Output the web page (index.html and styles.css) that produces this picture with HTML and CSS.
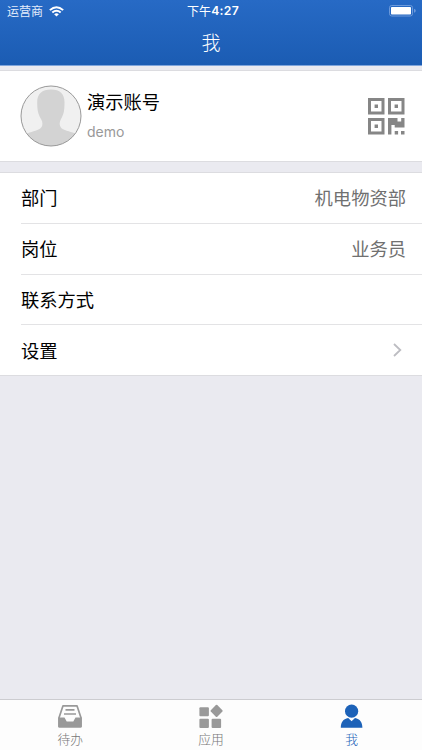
FILE: index.html
```
<!DOCTYPE html>
<html lang="zh-CN">
<head>
<meta charset="utf-8">
<meta name="viewport" content="width=device-width">
<title>我</title>
<link rel="stylesheet" href="styles.css">
</head>
<body>
<div class="screen">
  <header class="header">
    <div class="status">
      <div class="carrier"><span>运营商</span>
        <svg class="wifi" width="15" height="11" viewBox="0 0 14 11" preserveAspectRatio="none" fill="none" stroke="#fff" stroke-width="1.9"><path d="M.8 4.1Q7-1.7 13.2 4.1M3.1 6.5Q7 3 10.9 6.5"/><path d="M4.8 8.3Q7 6.4 9.2 8.3L7 10.6z" fill="#fff" stroke="none"/></svg>
      </div>
      <div class="clock">下午<b>4:27</b></div>
      <svg class="battery" width="28" height="12" viewBox="0 0 28 12"><rect x=".5" y=".5" width="23" height="10.5" rx="2.2" fill="none" stroke="#6d9adb"/><rect x="2" y="2" width="20" height="7.5" rx=".8" fill="#fff"/><path d="M25 3.8q1.8.3 1.8 2t-1.8 2z" fill="#6d9adb"/></svg>
    </div>
    <h1 class="title">我</h1>
  </header>
  <main class="content">
    <section class="profile">
      <svg class="avatar" width="62" height="62" viewBox="0 0 62 62">
        <defs><clipPath id="face"><circle cx="31" cy="31" r="30"/></clipPath></defs>
        <circle cx="31" cy="31" r="30" fill="#f0f0f0"/>
        <path clip-path="url(#face)" fill="#d3d3d3" d="M31 4.5C22 4.5 17.2 9 17.2 17C17.2 25 18 29 21 34C23.4 38 22.8 42 19 44.2C14.5 46.8 9 46.5 3 51V62H60V51C53 46.5 48 46.8 43 44.2C39.2 42 38.8 38 41 34C44 29 44.5 25 44.5 17C44.5 9 40 4.5 31 4.5Z"/>
        <circle cx="31" cy="31" r="30" fill="none" stroke="#999"/>
      </svg>
      <div class="identity"><div class="name">演示账号</div><div class="login">demo</div></div>
      <svg class="qr" width="37" height="37" viewBox="0 0 37 37" fill="#868686">
        <path fill-rule="evenodd" d="M0 0h16.5v16.5H0zM3 3v10.5h10.5V3zM20 0h16.5v16.5H20zM23 3v10.5h10.5V3zM0 20h16.5v16.5H0zM3 23v10.5h10.5V23z"/>
        <path d="M6.6 6.6h3.4v3.4H6.6zM26.6 6.6h3.4v3.4h-3.4zM6.6 26.6h3.4v3.4H6.6zM20 20h9.5v3.5h3.7V20h3.3v9.5h-9.8V27h-3.3v9.5H20zM26.7 33h3.4v3.5h-3.4zM33 33h3.5v3.5H33z"/>
      </svg>
    </section>
    <section class="list">
      <div class="row"><span>部门</span><span class="value">机电物资部</span></div>
      <div class="row"><span>岗位</span><span class="value">业务员</span></div>
      <div class="row"><span>联系方式</span></div>
      <div class="row"><span>设置</span><svg class="chevron" width="9" height="14" viewBox="0 0 9 14" fill="none" stroke="#bdbdc2" stroke-width="1.8"><path d="M1 1l6.3 6L1 13"/></svg></div>
    </section>
  </main>
  <nav class="tabs">
    <div class="tab">
      <svg width="26" height="25" viewBox="0 0 26 25"><path d="M6 1.8h14l4 12v8.8H2v-8.8z" fill="none" stroke="#999" stroke-width="1.7" stroke-linejoin="round"/><path d="M1.3 13.4h6.2l2.2 4.1h6.6l2.2-4.1h6.2v8.8q0 1.4-1.4 1.4H2.7q-1.4 0-1.4-1.4z" fill="#999"/><path d="M8.5 5.8h9M7 10h12" fill="none" stroke="#999" stroke-width="1.7"/></svg>
      <span>待办</span>
    </div>
    <div class="tab">
      <svg width="26" height="25" viewBox="0 0 26 25" fill="#999"><rect x="1.4" y="3.2" width="9.5" height="9" rx="1"/><rect x="1.4" y="14.7" width="9.5" height="9.2" rx="1"/><rect x="13.6" y="14.7" width="9.5" height="9.2" rx="1"/><rect x="14" y="2.3" width="9.2" height="9.2" rx="1" transform="rotate(45 18.6 6.9)"/></svg>
      <span>应用</span>
    </div>
    <div class="tab active">
      <svg width="26" height="25" viewBox="0 0 26 25" fill="#1d62b8"><circle cx="12.6" cy="7.2" r="6.6"/><path d="M1.8 23.8c.2-5.5 2.2-8.7 7.4-9.7l3.4 3.2 3.4-3.2c5.2 1 7.2 4.2 7.4 9.7z"/></svg>
      <span>我</span>
    </div>
  </nav>
</div>
</body>
</html>
```
FILE: styles.css
```
* { box-sizing: border-box; }
body {
  margin: 0;
  font-family: "Noto Sans CJK SC", sans-serif;
  color: #000;
}
.screen {
  height: 750px;
  display: flex;
  flex-direction: column;
  background: #eaeaf0;
}
.header {
  height: 66px;
  background: linear-gradient(#276ac5, #1b5cb3);
  border-bottom: 1px solid #7fa5dc;
  color: #fff;
}
.status {
  height: 22px;
  display: grid;
  grid-template-columns: 1fr auto 1fr;
  align-items: center;
  padding: 0 5px 0 7px;
  font-size: 12px;
  line-height: 22px;
}
.carrier { display: flex; align-items: center; gap: 6px; color: #e3edfb; }
.clock { display: flex; padding-left: 2px; letter-spacing: .1px; }
.clock b { font: 600 12.2px/22px Inter, sans-serif; letter-spacing: .3px; }
.battery { justify-self: end; }
.title {
  margin: 0;
  font-size: 19px;
  font-weight: 300;
  line-height: 40px;
  text-align: center;
}
.content { flex: 1; padding-top: 4px; }
.profile {
  height: 92px;
  display: flex;
  align-items: center;
  padding: 0 17px 0 20px;
  background: #fff;
  border: solid #dcdce0;
  border-width: 1px 0;
}
.identity { flex: 1; padding: 0 0 3px 5px; }
.name { font-size: 18.3px; line-height: 28px; }
.login { font: 14px/20px Inter, sans-serif; color: #999; margin-top: 7px; }
.list {
  margin-top: 10px;
  background: #fff;
  border: solid #dcdce0;
  border-width: 1px 0;
}
.row {
  height: 50.75px;
  margin-left: 21px;
  padding: 0 16px 1px 0;
  display: flex;
  align-items: center;
  justify-content: space-between;
  border-bottom: 1px solid #e3e3e5;
  font-size: 18.3px;
}
.row:last-child { border-bottom: 0; height: 49.75px; }
.value { color: #707070; }
.chevron { margin-right: 4px; }
.tabs {
  height: 51px;
  display: grid;
  grid-template-columns: repeat(3, 1fr);
  background: #fdfdfd;
  border-top: 1px solid #ccccd0;
}
.tab {
  display: flex;
  flex-direction: column;
  align-items: center;
  padding-top: 4px;
  font-size: 12.8px;
  font-weight: 300;
  line-height: 20px;
  color: #777;
}
.tab.active { color: #1d62b8; }
```
